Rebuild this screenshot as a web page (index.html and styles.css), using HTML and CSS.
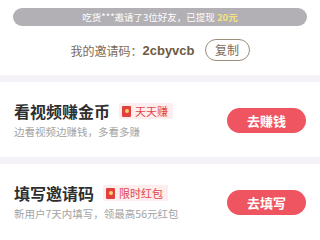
FILE: index.html
```html
<!DOCTYPE html>
<html lang="zh">
<head>
<meta charset="utf-8">
<link rel="stylesheet" href="styles.css">
</head>
<body>
<div class="top">
  <div class="notice">吃货***邀请了3位好友，已提现 <span class="amount">20元</span></div>
  <div class="invite">
    <span class="label">我的邀请码：</span><span class="code">2cbyvcb</span>
    <button class="copy">复制</button>
  </div>
</div>
<div class="band"></div>
<div class="card">
  <div class="info">
    <div class="title-row">
      <span class="title">看视频赚金币</span>
      <span class="badge"><span class="packet"><span class="dot"></span></span>天天赚</span>
    </div>
    <div class="sub">边看视频边赚钱，多看多赚</div>
  </div>
  <button class="action">去赚钱</button>
</div>
<div class="band"></div>
<div class="card">
  <div class="info">
    <div class="title-row">
      <span class="title">填写邀请码</span>
      <span class="badge"><span class="packet"><span class="dot"></span></span>限时红包</span>
    </div>
    <div class="sub">新用户7天内填写，领最高56元红包</div>
  </div>
  <button class="action">去填写</button>
</div>
</body>
</html>
```

FILE: styles.css
```css
* { box-sizing: border-box; }
html, body {
  margin: 0;
  padding: 0;
  background: #fff;
  width: 320px;
  height: 240px;
  overflow: hidden;
  font-family: "Noto Sans CJK SC", "Noto Sans", sans-serif;
}
.top {
  padding: 8px 13px 0;
  height: 75px;
}
.notice {
  height: 18px;
  border-radius: 9px;
  background: #b2b0b5;
  color: #fff;
  font-size: 9.5px;
  line-height: 18px;
  text-align: center;
}
.amount {
  color: #f4e37c;
  font-weight: bold;
}
.invite {
  margin-top: 13px;
  height: 22px;
  display: flex;
  align-items: center;
  justify-content: center;
}
.label {
  font-size: 12px;
  color: #7b6a58;
}
.code {
  font-family: "Liberation Sans", Arial, sans-serif;
  font-weight: bold;
  font-size: 13px;
  color: #6e5a43;
}
.copy {
  margin-left: 10px;
  width: 45px;
  height: 22px;
  border: 1px solid #9c8c7a;
  border-radius: 11px;
  background: #fff;
  color: #7b6a58;
  font-family: inherit;
  font-size: 12px;
  padding: 0;
  line-height: 20px;
}
.band {
  height: 7px;
  background: #f4f2f6;
}
.card {
  display: flex;
  align-items: center;
  justify-content: space-between;
  padding: 20px 14px 18px;
}
.title-row {
  display: flex;
  align-items: center;
  height: 18px;
}
.title {
  font-size: 16px;
  font-weight: bold;
  color: #2e2e2e;
  line-height: 18px;
}
.badge {
  margin-left: 9px;
  display: flex;
  align-items: center;
  height: 16px;
  padding: 0 5px 0 3px;
  background: #fdeded;
  border-radius: 2px;
  color: #e2464b;
  font-size: 11px;
  line-height: 16px;
}
.packet {
  width: 9px;
  height: 11px;
  background: #e2403f;
  border-radius: 1px;
  margin-right: 4px;
  display: flex;
  align-items: center;
  justify-content: center;
}
.dot {
  width: 4px;
  height: 4px;
  border-radius: 50%;
  background: #f7d36a;
}
.sub {
  margin-top: 5px;
  font-size: 10.5px;
  line-height: 14px;
  color: #a3a3a3;
}
.action {
  width: 79px;
  height: 25px;
  border: none;
  border-radius: 12.5px;
  background: #ef5561;
  color: #fff;
  font-family: inherit;
  font-size: 13px;
  font-weight: bold;
  padding: 0;
}
```
